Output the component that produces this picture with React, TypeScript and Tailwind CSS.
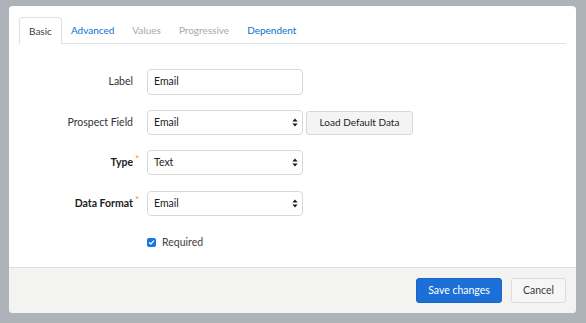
import React from "react";

const font = { fontFamily: "Lato, 'Open Sans', sans-serif" };

function Arrows() {
  return (
    <svg width="6" height="9" viewBox="0 0 6 9" className="shrink-0">
      <path d="M3 0.5 L5.6 3.6 L0.4 3.6 Z" fill="#1a1a1a" />
      <path d="M3 8.5 L5.6 5.4 L0.4 5.4 Z" fill="#1a1a1a" />
    </svg>
  );
}

function Select({ value }: { value: string }) {
  return (
    <div className="w-[156px] h-[25px] border border-[#d8d8d8] rounded-[4px] bg-white flex items-center justify-between pl-[6px] pr-[4px] text-[10.5px] text-[#1c1c1c]">
      <span>{value}</span>
      <Arrows />
    </div>
  );
}

function Label({ text, bold, req }: { text: string; bold?: boolean; req?: boolean }) {
  return (
    <div className="w-[114px] flex justify-end shrink-0">
      <span
        className={
          "relative text-[10.5px] " +
          (bold ? "font-bold text-[#1c1c1c]" : "text-[#333333]")
        }
      >
        {text}
        {req && (
          <span className="absolute -right-[6px] -top-[3px] text-[9px] font-bold text-[#ff9a3c]">*</span>
        )}
      </span>
    </div>
  );
}

export default function App() {
  return (
    <div
      className="w-[586px] h-[323px] bg-[#adb3b8] pt-[6px] pl-[9px] pr-[10px] pb-[10px] overflow-hidden"
      style={font}
    >
      <div className="w-[567px] h-[307px] bg-white rounded-[4px] flex flex-col overflow-hidden">
        <div className="flex-1 pl-[10px] pr-[10px] pt-[11px]">
          <div className="h-[27px] border-b border-[#e4e4e4] flex items-stretch text-[10px]">
            <div className="px-[9px] flex items-center border border-b-0 border-[#e0e0e0] rounded-t-[4px] bg-white -mb-px text-[#3e3e3c]">
              Basic
            </div>
            <div className="px-[9px] flex items-center text-[#0b6fd0]">Advanced</div>
            <div className="px-[9px] flex items-center text-[#a9a9a9]">Values</div>
            <div className="px-[9px] flex items-center text-[#a9a9a9]">Progressive</div>
            <div className="px-[9px] flex items-center text-[#0b6fd0]">Dependent</div>
          </div>

          <div className="flex flex-col">
            <div className="flex items-center gap-[14px] mt-[25px]">
              <Label text="Label" />
              <div className="w-[156px] h-[26px] border border-[#d8d8d8] rounded-[4px] bg-white flex items-center pl-[6px] text-[10.5px] text-[#1c1c1c]">
                Email
              </div>
            </div>
            <div className="flex items-center gap-[14px] mt-[15px]">
              <Label text="Prospect Field" />
              <div className="flex items-center gap-[3px]">
                <Select value="Email" />
                <div className="w-[107px] h-[24px] border border-[#d8d8d8] rounded-[3px] bg-[#f4f4f4] flex items-center justify-center text-[10px] text-[#1c1c1c]">
                  Load Default Data
                </div>
              </div>
            </div>
            <div className="flex items-center gap-[14px] mt-[15px]">
              <Label text="Type" bold req />
              <Select value="Text" />
            </div>
            <div className="flex items-center gap-[14px] mt-[16px]">
              <Label text="Data Format" bold req />
              <Select value="Email" />
            </div>
            <div className="flex items-center gap-[6px] mt-[19px] ml-[128px]">
              <div className="w-[9px] h-[9px] rounded-[2px] bg-[#1b74e4] flex items-center justify-center">
                <svg width="7" height="7" viewBox="0 0 7 7">
                  <path d="M1.3 3.6 L2.8 5 L5.7 1.9" stroke="white" strokeWidth="1.2" fill="none" strokeLinecap="round" strokeLinejoin="round" />
                </svg>
              </div>
              <span className="text-[10.5px] text-[#3e3e3c]">Required</span>
            </div>
          </div>
        </div>

        <div className="h-[46px] shrink-0 border-t border-[#dedede] bg-[#f3f3f2] flex items-center justify-end gap-[9px] pr-[10px]">
          <div className="w-[86px] h-[25px] rounded-[3px] bg-[#1b6fd6] border border-[#1a66c4] flex items-center justify-center text-[10.5px] text-white">
            Save changes
          </div>
          <div className="w-[55px] h-[25px] rounded-[3px] bg-[#f6f6f6] border border-[#dcdcdc] flex items-center justify-center text-[10.5px] text-[#3e3e3c]">
            Cancel
          </div>
        </div>
      </div>
    </div>
  );
}
